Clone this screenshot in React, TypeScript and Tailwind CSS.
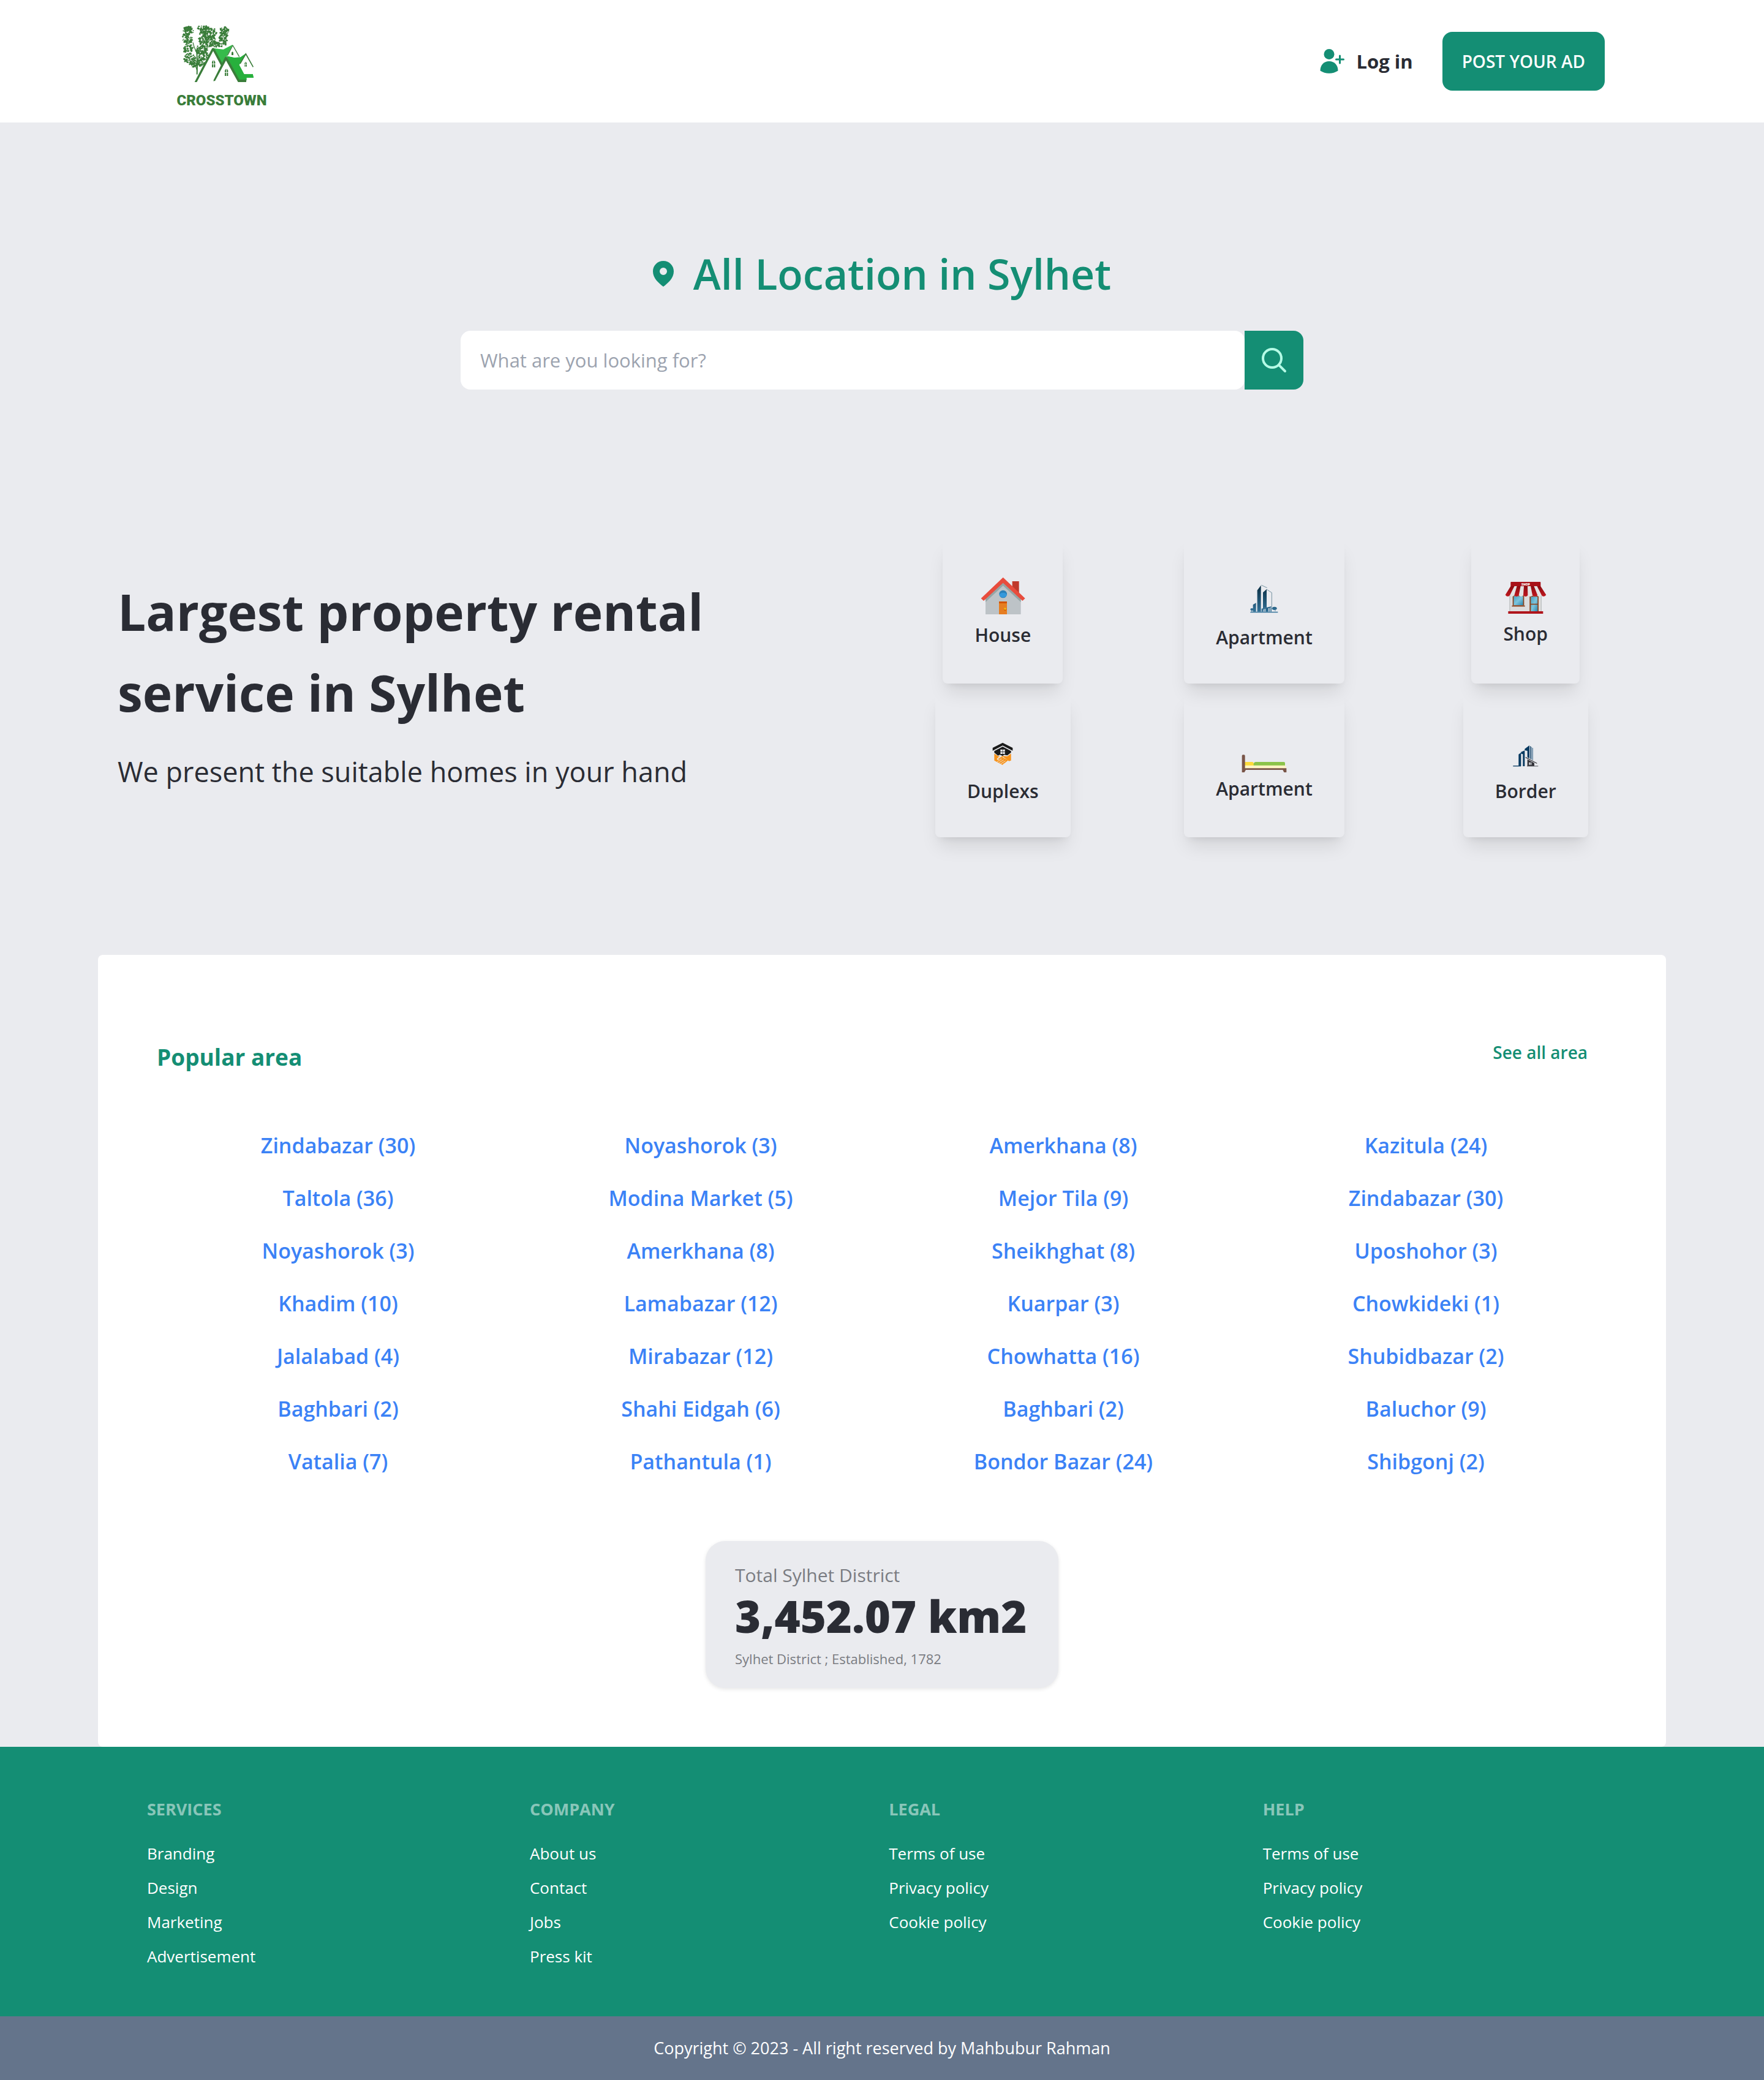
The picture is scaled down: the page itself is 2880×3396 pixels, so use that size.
import React from "react";

type IconProps = { className?: string };

function seeded(seed: number) {
  let s = seed;
  return () => {
    s = (s + 0x6d2b79f5) | 0;
    let t = Math.imul(s ^ (s >>> 15), 1 | s);
    t = (t + Math.imul(t ^ (t >>> 7), 61 | t)) ^ t;
    return ((t ^ (t >>> 14)) >>> 0) / 4294967296;
  };
}

const clusters: [number, number, number, number, number][] = [
  [114, 88, 26, 20, 60],
  [108, 128, 26, 28, 64],
  [112, 178, 24, 24, 40],
  [118, 226, 28, 24, 62],
  [142, 252, 24, 18, 34],
  [184, 76, 28, 12, 36],
  [210, 100, 44, 26, 120],
  [206, 142, 46, 28, 116],
  [178, 182, 30, 24, 66],
  [188, 214, 24, 20, 38],
  [178, 246, 18, 18, 26],
  [288, 92, 22, 20, 50],
  [286, 126, 22, 26, 54],
  [276, 158, 24, 12, 28],
  [240, 156, 22, 14, 26],
];

function leaves() {
  const rand = seeded(4217);
  const out: string[] = [];
  clusters.forEach(([cx, cy, rx, ry, n]) => {
    for (let i = 0; i < n; i++) {
      const a = rand() * Math.PI * 2;
      const d = Math.sqrt(rand());
      const x = cx + Math.cos(a) * rx * d;
      const y = cy + Math.sin(a) * ry * d;
      const pts: string[] = [];
      const r = 2.5 + rand() * 3.5;
      for (let k = 0; k < 6; k++) {
        const t = (k / 6) * Math.PI * 2;
        const q = r * (0.5 + rand() * 0.9);
        pts.push(`${(x + Math.cos(t) * q).toFixed(1)} ${(y + Math.sin(t) * q).toFixed(1)}`);
      }
      out.push(`M${pts.join("L")}Z`);
    }
  });
  return out.join("");
}

const leafPath = leaves();

function Logo() {
  return (
    <svg viewBox="54 60 444 288" className="h-24 w-[148px]" aria-hidden="true">
      <path d={leafPath} fill="#3a7d3a" />
      <g fill="none" stroke="#3a7d3a" strokeLinecap="round">
        <path d="M155 302C156 270 157 240 154 196" strokeWidth="6" />
        <path d="M155 285C150 262 140 250 126 240M156 250C160 225 168 205 184 190M154 200C146 180 138 168 136 150M155 205C162 180 176 170 190 150" strokeWidth="4" />
      </g>
      <path d="M236 178L146 340H156L240 192L276 262L284 248L300 220Z" fill="#fff" />
      <path d="M234 176L284 182L330 158L300 216L276 254Z" fill="#36bb4b" />
      <path d="M298 214L340 222L368 220L394 202L362 258L386 302H428L432 321H398V334L360 336Z" fill="#27b03c" />
      <path d="M330 162L304 214L340 222L362 216Z" fill="#fff" />
      <path d="M330 162L304 212M330 162L362 218" stroke="#3a7d3a" strokeWidth="4" fill="none" />
      <path d="M394 204L364 258L386 302H428V262Z" fill="#fff" />
      <path d="M386 303H428L432 321H396L390 318Z" fill="#27b03c" />
      <path d="M366 252L394 204L430 268" stroke="#3a7d3a" strokeWidth="5" fill="none" />
      <path d="M143 342L228 178Q234 171 240 178L281 254L274 264L234 190L154 342Z" fill="#3a7d3a" />
      <path d="M236 332L291 222Q297 213 303 222L362 330H396V342H356L297 236L244 335L236 338Z" fill="#3a7d3a" />
      <path d="M228 270V244Q236 226 244 244V270Z" fill="#3a7d3a" />
      <path d="M236 232V272M226 253H246" stroke="#fff" strokeWidth="3" />
      <path d="M291 312V286Q299 268 307 286V312Z" fill="#3a7d3a" />
      <path d="M299 274V314M289 295H309" stroke="#fff" strokeWidth="3" />
      <path d="M324 210V198Q328 188 333 198V210Z" fill="#3a7d3a" />
      <path d="M388 266V250Q393 236 399 250V266Z" fill="#3a7d3a" />
      <path d="M393 240V268M386 256H401" stroke="#fff" strokeWidth="2" />
    </svg>
  );
}

function UserPlusIcon({ className }: IconProps) {
  return (
    <svg viewBox="0 0 40 40" className={className} aria-hidden="true">
      <circle cx="15" cy="8.5" r="8.5" fill="currentColor" />
      <path d="M15 20C6 20 .5 26.500 .5 35.500Q7 39.700 15 39.700Q23 39.700 29.500 35.500C29.500 26.500 24 20 15 20Z" fill="currentColor" />
      <path d="M32.500 11V23M26.500 17H38.500" stroke="currentColor" strokeWidth="3" strokeLinecap="round" />
    </svg>
  );
}

function PinIcon({ className }: IconProps) {
  return (
    <svg viewBox="0 0 34 42" className={className} aria-hidden="true">
      <path fillRule="evenodd" d="M17 0C7.500 0 0 7.500 0 17C0 28 9 36 17 42C25 36 34 28 34 17C34 7.500 26.500 0 17 0ZM17 11A6 6 0 1 1 17 23A6 6 0 0 1 17 11Z" fill="currentColor" />
    </svg>
  );
}

function SearchIcon({ className }: IconProps) {
  return (
    <svg viewBox="0 0 24 24" className={className} fill="none" stroke="currentColor" strokeWidth="2" strokeLinecap="round" strokeLinejoin="round" aria-hidden="true">
      <path d="m21 21-5.197-5.197m0 0A7.500 7.500 0 1 0 5.196 5.196a7.500 7.500 0 0 0 10.607 10.607Z" />
    </svg>
  );
}

function HouseArt() {
  return (
    <svg viewBox="46 57 252 252" className="h-[84px] w-[84px]" aria-hidden="true">
      <path d="M219 117H252V180L219 150Z" fill="#c0392b" />
      <path d="M88 200L174 122L261 200V279H88Z" fill="#bdc3c7" />
      <path d="M174 122L88 200V219L174 139L261 219V200Z" fill="#95a5a5" />
      <path d="M174 98L66 201L79 213L174 125L269 213L282 201Z" fill="#e84c3d" />
      <circle cx="174" cy="180" r="19" fill="#2980b9" />
      <path d="M155.500 184A19 14 0 0 1 192.500 184A19 16 0 0 1 155.500 184Z" fill="#3498db" />
      <path d="M154 216H193V279H154Z" fill="#e67e22" />
      <path d="M154 216H193V225H154Z" fill="#d35400" />
      <circle cx="184" cy="256" r="5.500" fill="#d35400" />
      <circle cx="184" cy="252" r="5" fill="#f1c40f" />
    </svg>
  );
}

function TowerArt() {
  return (
    <svg viewBox="43 27 240 264" className="h-[88px] w-20" aria-hidden="true">
      <defs>
        <linearGradient id="tower" x1="0" y1="100" x2="0" y2="240" gradientUnits="userSpaceOnUse">
          <stop offset="0" stopColor="#06293c" />
          <stop offset="1" stopColor="#34739a" />
        </linearGradient>
      </defs>
      <g fill="url(#tower)">
        <path d="M129 131L147 107V236H129Z" />
        <path d="M157 142L175 126V216L157 220Z" />
        <path d="M108 202L123 193V236H108Z" />
        <path d="M150 221L198 210V214L192 216V236H188V218L184 219V236H169V222L165 223V236H161V224L158 225V236H150Z" />
        <path d="M195 214H199V236H195Z" />
        <ellipse cx="103" cy="225" rx="8" ry="6" />
        <ellipse cx="213" cy="220" rx="12" ry="8" />
        <path d="M95 236H230V241H95ZM101 224H104V238H101ZM216 222H218V234H216Z" />
      </g>
      <path d="M149 106L177 119M175 127L200 143V212" fill="none" stroke="#5b8090" strokeWidth="2.500" />
    </svg>
  );
}

function ShopArt() {
  return (
    <svg viewBox="74 27 216 246" className="h-[82px] w-[72px]" aria-hidden="true">
      <defs>
        <linearGradient id="glass" x1="0" y1="0" x2="1" y2="1">
          <stop offset="0" stopColor="#4aa3c4" />
          <stop offset=".5" stopColor="#7cc4dc" />
          <stop offset="1" stopColor="#2d86ad" />
        </linearGradient>
        <linearGradient id="awning" x1="0" y1="0" x2="0" y2="1">
          <stop offset="0" stopColor="#8c0c12" />
          <stop offset="1" stopColor="#c0181f" />
        </linearGradient>
      </defs>
      <path d="M102 150H260V236H102Z" fill="#dcdcdc" />
      <path d="M102 150H106V236H102ZM256 150H260V236H256Z" fill="#bfc2c4" />
      <path d="M118 152H174V206H118Z" fill="#8a3f17" />
      <path d="M123 160H169V204H123Z" fill="url(#glass)" />
      <path d="M114 206H178V211H114Z" fill="#8a3f17" />
      <path d="M201 158H245V236H201Z" fill="#8a3f17" />
      <path d="M207 163H240V197H207ZM207 202H240V235H207Z" fill="url(#glass)" />
      <path d="M109 110H254L282 154Q270 168 260 156Q248 168 237 156Q226 168 215 156Q204 168 192 156Q182 168 170 156Q158 168 148 156Q137 168 126 156Q114 168 104 156Q92 168 82 154Z" fill="#e3e3e3" />
      <g fill="url(#awning)">
        <path d="M109 110H127L104 156Q92 168 82 154Z" />
        <path d="M139 110H157L148 156Q137 168 126 156Z" />
        <path d="M173 110H191L192 156Q182 168 170 156Z" />
        <path d="M206 110H222L240 156Q226 168 215 156Z" />
        <path d="M237 110H254L282 154Q270 168 260 156Z" />
      </g>
      <path d="M111 90H252Q255 90 255 93V111H108V93Q108 90 111 90Z" fill="#a81219" />
      <text x="182" y="107" textAnchor="middle" fontSize="15" fontWeight="800" fill="#fff" fontFamily="Open Sans, sans-serif">SHOP</text>
      <path d="M96 234H267V246H96Z" fill="#b0151c" />
    </svg>
  );
}

function DuplexArt() {
  return (
    <svg viewBox="53 -30 240 264" className="h-[88px] w-20" aria-hidden="true">
      <path d="M173 68L222 93V107L173 82L124 107V93Z" fill="#1a1a1a" />
      <path d="M173 87L214 109V116L196 130L180 127L173 133L160 127L150 131L132 116V109Z" fill="#1a1a1a" />
      <path d="M162 101H172V111H162ZM174 101H184V111H174ZM162 113H172V123H162ZM174 113H184V123H174Z" fill="#eaebef" />
      <path d="M132 121L152 134L160 132L144 148L150 153L172 140L200 154L173 177L132 155Z" fill="#f7941d" />
      <path d="M214 121V155L204 158L176 138L154 149L150 147L172 133L196 134Z" fill="#f7941d" />
      <path d="M146 161L168 148M154 166L178 152M163 171L187 157M173 175L196 161" stroke="#eaebef" strokeWidth="2.500" />
    </svg>
  );
}

function BedArt() {
  return (
    <svg viewBox="42 -30 240 252" className="h-[84px] w-20" aria-hidden="true">
      <path d="M66 162H104Q110 162 111 170L112 182H66Z" fill="#fddb3a" />
      <path d="M110 182V174Q110 162 122 162H258Q264 162 264 168V182Z" fill="#8bc34a" />
      <path d="M66 179H265Q270 184 270 194H66Z" fill="#fff4c4" />
      <path d="M53 132Q53 127 58 127H63Q68 127 68 132V193H271V213H259L253 201H72L65 213H53Z" fill="#795548" />
    </svg>
  );
}

function BorderArt() {
  return (
    <svg viewBox="62 -30 240 264" className="h-[88px] w-20" aria-hidden="true">
      <g fill="#083a61">
        <path d="M147 125L159 116V183H147Z" />
        <path d="M159 113L177 106V183H168V124L159 122Z" />
        <path d="M177 98L200 81V145L190 139V108L177 105Z" />
        <path d="M203 84L207 86V148L203 146Z" />
        <path d="M120 180H158V184H120Z" />
      </g>
      <path d="M209 88L212 90V150L209 149ZM214 92L218 94V154L214 152Z" fill="#5a7f9c" />
      <path d="M181 137L237 167V171L181 142Z" fill="#35353b" />
      <path d="M190 149L224 167V183H190Z" fill="#35353b" />
      <path d="M198 164H203V176H198ZM205 164H210V176H205Z" fill="#dfe1e5" />
      <path d="M188 181H243V184H188Z" fill="#55555b" />
    </svg>
  );
}

const categories = [
  { label: "House", art: <HouseArt /> },
  { label: "Apartment", art: <TowerArt /> },
  { label: "Shop", art: <ShopArt /> },
  { label: "Duplexs", art: <DuplexArt /> },
  { label: "Apartment", art: <BedArt /> },
  { label: "Border", art: <BorderArt /> },
];

const areas = [
  "Zindabazar (30)", "Noyashorok (3)", "Amerkhana (8)", "Kazitula (24)",
  "Taltola (36)", "Modina Market (5)", "Mejor Tila (9)", "Zindabazar (30)",
  "Noyashorok (3)", "Amerkhana (8)", "Sheikhghat (8)", "Uposhohor (3)",
  "Khadim (10)", "Lamabazar (12)", "Kuarpar (3)", "Chowkideki (1)",
  "Jalalabad (4)", "Mirabazar (12)", "Chowhatta (16)", "Shubidbazar (2)",
  "Baghbari (2)", "Shahi Eidgah (6)", "Baghbari (2)", "Baluchor (9)",
  "Vatalia (7)", "Pathantula (1)", "Bondor Bazar (24)", "Shibgonj (2)",
];

const footerGroups = [
  { title: "SERVICES", links: ["Branding", "Design", "Marketing", "Advertisement"] },
  { title: "COMPANY", links: ["About us", "Contact", "Jobs", "Press kit"] },
  { title: "LEGAL", links: ["Terms of use", "Privacy policy", "Cookie policy"] },
  { title: "HELP", links: ["Terms of use", "Privacy policy", "Cookie policy"] },
];

export default function App() {
  return (
    <div className="bg-[#eaebef] font-['Open_Sans',sans-serif] text-[#2a2c34]">
      <header className="flex h-[200px] items-center justify-between bg-white pr-[260px] pl-72">
        <a href="#" className="flex flex-col items-center pt-6">
          <Logo />
          <span className="mt-2 font-[Roboto,sans-serif] text-[24px] leading-10 font-black text-[#3a7d3a]">CROSSTOWN</span>
        </a>
        <nav className="flex items-center gap-12">
          <a href="#" className="flex items-center gap-5 text-[31px] leading-12 font-bold">
            <UserPlusIcon className="size-10 text-[#148e74]" />
            Log in
          </a>
          <button type="button" className="h-24 rounded-2xl bg-[#148e74] px-8 text-[28px] font-semibold text-white">POST YOUR AD</button>
        </nav>
      </header>

      <main>
        <section className="flex flex-col items-center pt-[207px]">
          <h1 className="flex items-center gap-8 text-[68px] leading-20 font-semibold text-[#148e74]">
            <PinIcon className="h-[42px] w-[34px]" />
            All Location in Sylhet
          </h1>
          <form className="mt-[53px] flex" onSubmit={(e) => e.preventDefault()}>
            <input type="text" aria-label="Search" placeholder="What are you looking for?" className="h-24 w-[1280px] rounded-2xl bg-white px-8 text-[31px] outline-none placeholder:text-[#9ca3af]" />
            <button type="submit" aria-label="Search" className="flex size-24 items-center justify-center rounded-r-2xl bg-[#148e74] text-[#b5fbe6]">
              <SearchIcon className="size-12" />
            </button>
          </form>
        </section>

        <section className="mt-[245px] grid grid-cols-2 items-center pr-44 pl-36">
          <div className="pb-5 pl-12">
            <h2 className="text-[82px] leading-[132px] font-bold">Largest property rental<br />service in Sylhet</h2>
            <p className="mt-7 text-[45px] leading-[72px]">We present the suitable homes in your hand</p>
          </div>
          <div className="grid grid-cols-3 justify-items-center gap-y-4">
            {categories.map((c, i) => (
              <a href="#" key={i} className="flex flex-col items-center rounded-lg px-[52px] pt-12 pb-[51px] shadow-[0_20px_30px_-6px_rgba(0,0,0,0.1),0_8px_12px_-8px_rgba(0,0,0,0.1)]">
                {c.art}
                <span className="text-[30px] leading-12 font-semibold">{c.label}</span>
              </a>
            ))}
          </div>
        </section>

        <section className="mx-40 mt-48 rounded-lg bg-white px-24 pt-[127px] pb-24">
          <div className="flex items-start justify-between pr-8">
            <h2 className="pt-3 text-[37px] leading-14 font-bold text-[#148e74]">Popular area</h2>
            <a href="#" className="pt-2 text-[28px] leading-12 font-semibold text-[#148e74]">See all area</a>
          </div>
          <ul className="mt-[88px] grid grid-cols-4 gap-y-[30px] text-center text-[34px] leading-14 font-semibold text-[#3b82f6]">
            {areas.map((a, i) => (
              <li key={i}><a href="#">{a}</a></li>
            ))}
          </ul>
          <div className="mx-auto mt-[102px] w-[576px] rounded-[32px] bg-[#eaebef] px-12 py-8 shadow-[0_2px_6px_rgba(0,0,0,0.1)]">
            <div className="text-[30px] leading-12 text-[#7a7c82]">Total Sylhet District</div>
            <div className="text-[72px] leading-[84px] font-extrabold whitespace-nowrap">3,452.07 km2</div>
            <div className="mt-3 text-[22px] leading-8 text-[#7a7c82]">Sylhet District ; Established, 1782</div>
          </div>
        </section>
      </main>

      <footer className="bg-[#148e74] text-white">
        <div className="grid grid-flow-col gap-8 px-60 pt-20 pb-[78px]">
          {footerGroups.map((g) => (
            <nav key={g.title}>
              <h3 className="mb-[30px] text-[27px] leading-[44px] font-bold text-white/50">{g.title}</h3>
              <ul className="space-y-4">
                {g.links.map((l) => (
                  <li key={l} className="text-[26px] leading-10"><a href="#">{l}</a></li>
                ))}
              </ul>
            </nav>
          ))}
        </div>
        <p className="bg-[#64748b] py-8 text-center text-[27px] leading-10">Copyright © 2023 - All right reserved by Mahbubur Rahman</p>
      </footer>
    </div>
  );
}
